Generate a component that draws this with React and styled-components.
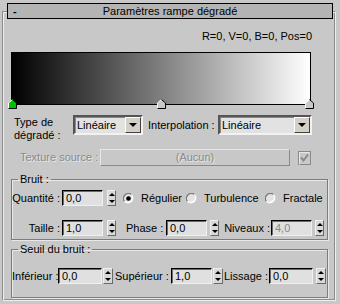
import React from 'react';
import styled, { createGlobalStyle } from 'styled-components';

const GlobalStyle = createGlobalStyle`
  html, body { margin: 0; padding: 0; background: #c8c8c8; }
  body { font-family: "Liberation Sans", Arial, sans-serif; font-size: 11px; color: #000; }
  * { box-sizing: border-box; }
`;

const Page = styled.div`
  width: 340px;
  height: 304px;
  padding-top: 3px;
  overflow: hidden;
`;

const TitleBar = styled.div`
  position: relative;
  z-index: 1;
  margin: 0 7px;
  height: 16px;
  border: 1px solid #000;
  background: #b4b4b4;
  display: grid;
  grid-template-columns: 20px 1fr 20px;
  align-items: center;
  line-height: 14px;
`;

const Collapse = styled.span`
  padding-left: 5px;
  font-weight: bold;
`;

const Title = styled.span`
  text-align: center;
`;

const Rollout = styled.div`
  margin: -8px 4px 0 2px;
  height: 290px;
  border: 1px solid #8c8c8c;
  border-right-color: #eeeeee;
  border-bottom-color: #eeeeee;
  box-shadow: inset 1px 1px 0 #eeeeee, inset -1px -1px 0 #8c8c8c;
  padding-top: 18px;
`;

const Info = styled.div`
  height: 13px;
  line-height: 13px;
  text-align: right;
  padding-right: 23px;
`;

const Ramp = styled.div`
  position: relative;
  margin: 9px 0 0 8px;
  width: 300px;
  height: 53px;
  border: 1px solid #000;
  background: linear-gradient(to right, #000 0%, #fff 100%);
`;

const Flag = styled.svg`
  position: absolute;
  bottom: -5px;
  left: ${p => -4 + p.$pos * 297}px;
  width: 9px;
  height: 10px;
`;

const TypeRow = styled.div`
  display: flex;
  align-items: flex-start;
  margin-top: 10px;
  padding-left: 11px;
  height: 27px;
`;

const Caption = styled.span`
  width: ${p => p.$w}px;
  margin-left: ${p => p.$ml || 0}px;
  line-height: 13px;
  padding-top: ${p => p.$pt || 0}px;
  text-align: ${p => (p.$right ? 'right' : 'left')};
  white-space: nowrap;
  color: ${p => (p.$off ? '#8a8a8a' : '#000')};
  text-shadow: ${p => (p.$off ? '1px 1px 0 #e6e6e6' : 'none')};
  flex-shrink: 0;
`;

const Select = styled.div`
  display: flex;
  align-items: center;
  justify-content: space-between;
  width: ${p => p.$w}px;
  height: 20px;
  border: 2px solid;
  border-color: #555 #f2f2f2 #f2f2f2 #555;
  box-shadow: inset 1px 1px 0 #888;
  background: #e2e2e2;
  padding-left: 2px;
  flex-shrink: 0;
`;

const DropButton = styled.div`
  width: 16px;
  height: 16px;
  background: #d4d0c8;
  border: 1px solid;
  border-color: #fff #404040 #404040 #fff;
  display: flex;
  align-items: center;
  justify-content: center;
  &::after {
    content: '';
    border-left: 4px solid transparent;
    border-right: 4px solid transparent;
    border-top: 4px solid #000;
  }
`;

const TextureRow = styled.div`
  display: flex;
  align-items: center;
  margin-top: 7px;
  padding-left: 17px;
  height: 17px;
`;

const MapButton = styled.div`
  width: 190px;
  height: 17px;
  border: 1px solid;
  border-color: #e8e8e8 #8a8a8a #8a8a8a #e8e8e8;
  color: #8a8a8a;
  text-shadow: 1px 1px 0 #e6e6e6;
  text-align: center;
  line-height: 15px;
  flex-shrink: 0;
`;

const Check = styled.svg`
  margin-left: 8px;
  width: 13px;
  height: 14px;
  flex-shrink: 0;
`;

const Group = styled.fieldset`
  margin: ${p => p.$mt}px 0 0 8px;
  width: 317px;
  padding: ${p => p.$pt}px 0 ${p => p.$pb}px 0;
  border: 1px solid #7c7c7c;
  box-shadow: inset 1px 1px 0 #e8e8e8, 1px 1px 0 #e8e8e8;
  min-inline-size: 0;
`;

const Legend = styled.legend`
  margin-left: 6px;
  padding: 0 2px;
  line-height: 13px;
`;

const FieldRow = styled.div`
  display: flex;
  align-items: center;
  height: 16px;
  margin-top: ${p => p.$mt || 0}px;
`;

const NumBox = styled.div`
  width: ${p => p.$w}px;
  height: 16px;
  margin-left: ${p => p.$ml || 0}px;
  border: 1px solid;
  border-color: #000 #f0f0f0 #f0f0f0 #000;
  box-shadow: inset 1px 1px 0 #6a6a6a;
  background: #e0e0e0;
  padding-left: 3px;
  line-height: 14px;
  color: ${p => (p.$off ? '#8a8a8a' : '#000')};
  flex-shrink: 0;
`;

const Spin = styled.div`
  display: flex;
  flex-direction: column;
  width: ${p => p.$w || 9}px;
  height: 16px;
  margin-left: ${p => p.$ml || 0}px;
  border: 1px solid;
  border-color: #f0f0f0 #6a6a6a #6a6a6a #f0f0f0;
  background: #d8d8d8;
  flex-shrink: 0;
`;

const SpinHalf = styled.div`
  flex: 1;
  display: flex;
  align-items: center;
  justify-content: center;
  &::after {
    content: '';
    border-left: 3px solid transparent;
    border-right: 3px solid transparent;
    ${p => (p.$up ? 'border-bottom: 3px solid #000;' : 'border-top: 3px solid #000;')}
  }
`;

const RadioItem = styled.div`
  display: flex;
  align-items: center;
  width: ${p => p.$w}px;
  margin-left: ${p => p.$ml || 0}px;
  flex-shrink: 0;
`;

const RadioDot = styled.svg`
  width: 11px;
  height: 11px;
  margin-right: 7px;
  flex-shrink: 0;
`;

const Spinner = ({ ml, w }) => (
  <Spin $ml={ml} $w={w}>
    <SpinHalf $up />
    <SpinHalf />
  </Spin>
);

const Radio = ({ label, checked, w, ml }) => (
  <RadioItem $w={w} $ml={ml}>
    <RadioDot viewBox="0 0 11 11">
      <circle cx="5.5" cy="5.5" r="5" fill="#e4e4e4" />
      <path d="M1.5 8.5 A5 5 0 0 1 8.5 1.5" stroke="#7a7a7a" strokeWidth="1.2" fill="none" />
      <path d="M8.5 1.5 A5 5 0 0 1 1.5 8.5" stroke="#ffffff" strokeWidth="1.2" fill="none" />
      {checked && <circle cx="5.5" cy="5.5" r="2.3" fill="#000" />}
    </RadioDot>
    <span>{label}</span>
  </RadioItem>
);

const Marker = ({ pos, active }) => (
  <Flag $pos={pos} viewBox="0 0 9 10">
    <polygon points="0.5,4 4.5,0.5 8.5,4 8.5,9.5 0.5,9.5" fill={active ? '#00c000' : '#c8c8c8'} />
    <polyline points="0.5,9.5 0.5,4 4.5,0.5" stroke="#ffffff" fill="none" />
    <polyline points="4.5,0.5 8.5,4 8.5,9.5 0.5,9.5" stroke="#000" fill="none" />
  </Flag>
);

export default function App() {
  return (
    <Page>
      <GlobalStyle />
      <TitleBar>
        <Collapse>-</Collapse>
        <Title>Paramètres rampe dégradé</Title>
        <span />
      </TitleBar>
      <Rollout>
        <Info>R=0, V=0, B=0, Pos=0</Info>
        <Ramp>
          <Marker pos={0} active />
          <Marker pos={0.5} />
          <Marker pos={1} />
        </Ramp>

        <TypeRow>
          <Caption $w={59} $pt={1}>Type de<br />dégradé :</Caption>
          <Select $w={70}>
            <span>Linéaire</span>
            <DropButton />
          </Select>
          <Caption $w={70} $ml={5} $pt={4}>Interpolation :</Caption>
          <Select $w={94}>
            <span>Linéaire</span>
            <DropButton />
          </Select>
        </TypeRow>

        <TextureRow>
          <Caption $w={80} $off>Texture source :</Caption>
          <MapButton>(Aucun)</MapButton>
          <Check viewBox="0 0 13 14">
            <rect x="0.5" y="0.5" width="12" height="13" fill="#c8c8c8" stroke="#8a8a8a" />
            <polyline points="1.5,13.5 1.5,1.5 11.5,1.5" stroke="#e8e8e8" fill="none" />
            <path d="M3 6.5 L5.5 9.5 L10 3.5" stroke="#8a8a8a" strokeWidth="2" fill="none" />
          </Check>
        </TextureRow>

        <Group $mt={7} $pt={4} $pb={3}>
          <Legend>Bruit :</Legend>
          <FieldRow>
            <Caption $w={48} $right>Quantité :</Caption>
            <NumBox $w={41} $ml={2}>0,0</NumBox>
            <Spinner ml={4} />
            <Radio label="Régulier" checked w={63} ml={7} />
            <Radio label="Turbulence" w={79} />
            <Radio label="Fractale" w={55} />
          </FieldRow>
          <FieldRow $mt={14}>
            <Caption $w={48} $right>Taille :</Caption>
            <NumBox $w={41} $ml={2}>1,0</NumBox>
            <Spinner ml={4} />
            <Caption $w={38} $ml={10}>Phase :</Caption>
            <NumBox $w={41} $ml={2}>0,0</NumBox>
            <Spinner ml={3} />
            <Caption $w={51} $right>Niveaux :</Caption>
            <NumBox $w={41} $ml={1} $off>4,0</NumBox>
            <Spinner ml={3} />
          </FieldRow>
        </Group>

        <Group $mt={3} $pt={12} $pb={13}>
          <Legend>Seuil du bruit :</Legend>
          <FieldRow>
            <Caption $w={45} $right>Inférieur :</Caption>
            <NumBox $w={44} $ml={1}>0,0</NumBox>
            <Spinner ml={1} w={10} />
            <Caption $w={55} $ml={2}>Supérieur :</Caption>
            <NumBox $w={41} $ml={1}>1,0</NumBox>
            <Spinner ml={1} w={10} />
            <Caption $w={44} $ml={1}>Lissage :</Caption>
            <NumBox $w={44} $ml={1}>0,0</NumBox>
            <Spinner ml={3} w={10} />
          </FieldRow>
        </Group>
      </Rollout>
    </Page>
  );
}
